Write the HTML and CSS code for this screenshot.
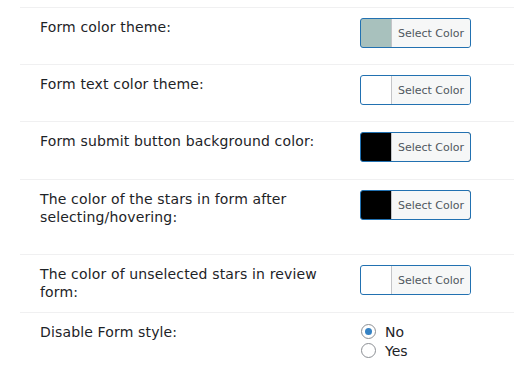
FILE: index.html
```html
<!DOCTYPE html>
<html>
<head>
<meta charset="utf-8">
<link rel="stylesheet" href="styles.css">
</head>
<body>
<div class="settings">
  <div class="row">
    <div class="label">Form color theme:</div>
    <div class="field">
      <button class="color-btn swatch-teal"><span class="color-text">Select Color</span></button>
    </div>
  </div>
  <div class="row">
    <div class="label">Form text color theme:</div>
    <div class="field">
      <button class="color-btn swatch-white"><span class="color-text">Select Color</span></button>
    </div>
  </div>
  <div class="row row-plus">
    <div class="label">Form submit button background color:</div>
    <div class="field">
      <button class="color-btn swatch-black"><span class="color-text">Select Color</span></button>
    </div>
  </div>
  <div class="row">
    <div class="label label-tall">The color of the stars in form after selecting/hovering:</div>
    <div class="field">
      <button class="color-btn swatch-black"><span class="color-text">Select Color</span></button>
    </div>
  </div>
  <div class="row row-plus">
    <div class="label">The color of unselected stars in review form:</div>
    <div class="field">
      <button class="color-btn swatch-white"><span class="color-text">Select Color</span></button>
    </div>
  </div>
  <div class="row">
    <div class="label">Disable Form style:</div>
    <div class="field radios">
      <label class="radio"><input type="radio" name="disable" checked><span>No</span></label>
      <label class="radio"><input type="radio" name="disable"><span>Yes</span></label>
    </div>
  </div>
</div>
</body>
</html>
```
FILE: styles.css
```css
html, body {
  margin: 0;
  padding: 0;
  background: #ffffff;
}
body {
  font-family: "DejaVu Sans", Verdana, sans-serif;
  font-size: 14px;
  color: #1d2327;
  line-height: 18px;
}
.settings {
  margin-left: 20px;
  padding-top: 7px;
}
.row {
  display: grid;
  grid-template-columns: 340px 1fr;
  align-items: start;
  border-top: 1px solid #f0f0f1;
}
.label {
  padding: 10px 20px 10px 20px;
  letter-spacing: 0.15px;
}
.label-tall {
  padding-bottom: 28px;
}
.field {
  padding: 10px 0 16px;
}
.row-plus .field {
  padding-bottom: 17px;
}
.color-btn {
  display: flex;
  width: 111px;
  height: 30px;
  padding: 0;
  margin: 0;
  border: 1px solid #2271b1;
  border-radius: 3px;
  overflow: hidden;
  cursor: pointer;
  font-family: "DejaVu Sans", Verdana, sans-serif;
}
.swatch-teal { background: #a8c1bd; }
.swatch-white { background: #ffffff; }
.swatch-black { background: #000000; }
.color-text {
  margin-left: 30px;
  flex: 1;
  border-left: 1px solid #c3c4c7;
  background: #f6f7f7;
  color: #50575e;
  font-size: 11px;
  line-height: 27px;
  padding-top: 1px;
  text-align: center;
  white-space: nowrap;
}
.radios {
  display: flex;
  flex-direction: column;
  padding-top: 9px;
}
.radio {
  display: flex;
  align-items: center;
  height: 19px;
  gap: 9px;
  font-size: 14px;
}
.radio input {
  appearance: none;
  -webkit-appearance: none;
  margin: 0 0 0 1px;
  width: 15px;
  height: 15px;
  border: 1px solid #8c8f94;
  border-radius: 50%;
  background: #fff;
  display: flex;
  align-items: center;
  justify-content: center;
  box-sizing: border-box;
}
.radio input:checked::before {
  content: "";
  width: 7px;
  height: 7px;
  border-radius: 50%;
  background: #3582c4;
}
```
